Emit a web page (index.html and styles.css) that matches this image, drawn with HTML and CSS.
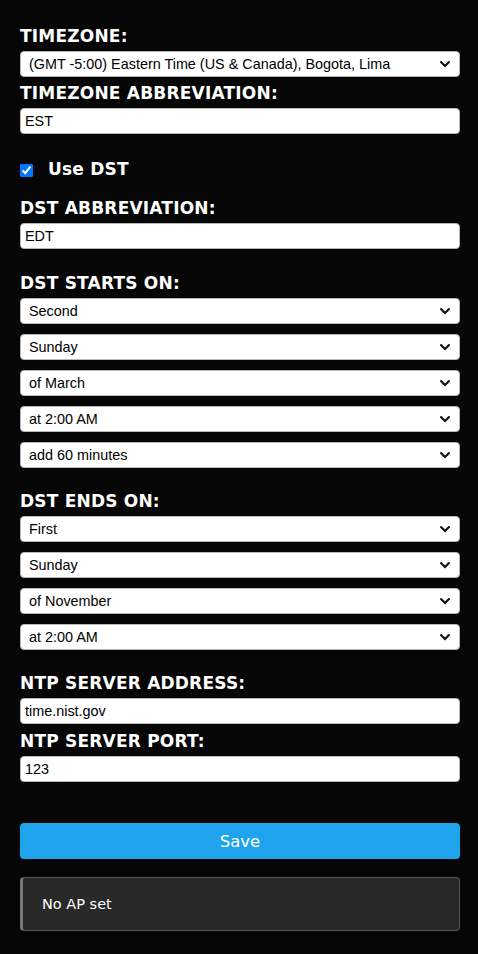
FILE: index.html
```html
<!DOCTYPE html>
<html>
<head>
<meta charset="utf-8">
<link rel="stylesheet" href="styles.css">
</head>
<body>
<form class="form">
  <label class="lbl">TIMEZONE:</label>
  <div class="sel">
    <select><option>(GMT -5:00) Eastern Time (US &amp; Canada), Bogota, Lima</option></select>
    <svg class="chev" width="10" height="7" viewBox="0 0 10 7"><path d="M1.2 1.2 L5 5 L8.8 1.2" fill="none" stroke="#111" stroke-width="2.2" stroke-linecap="square"/></svg>
  </div>
  <label class="lbl">TIMEZONE ABBREVIATION:</label>
  <input class="inp" type="text" value="EST">

  <div class="chk-row">
    <input class="chk" type="checkbox" checked>
    <span class="chk-lbl">Use DST</span>
  </div>

  <label class="lbl">DST ABBREVIATION:</label>
  <input class="inp" type="text" value="EDT">

  <label class="lbl group">DST STARTS ON:</label>
  <div class="stack">
    <div class="sel"><select><option>Second</option></select><svg class="chev" width="10" height="7" viewBox="0 0 10 7"><path d="M1.2 1.2 L5 5 L8.8 1.2" fill="none" stroke="#111" stroke-width="2.2" stroke-linecap="square"/></svg></div>
    <div class="sel"><select><option>Sunday</option></select><svg class="chev" width="10" height="7" viewBox="0 0 10 7"><path d="M1.2 1.2 L5 5 L8.8 1.2" fill="none" stroke="#111" stroke-width="2.2" stroke-linecap="square"/></svg></div>
    <div class="sel"><select><option>of March</option></select><svg class="chev" width="10" height="7" viewBox="0 0 10 7"><path d="M1.2 1.2 L5 5 L8.8 1.2" fill="none" stroke="#111" stroke-width="2.2" stroke-linecap="square"/></svg></div>
    <div class="sel"><select><option>at 2:00 AM</option></select><svg class="chev" width="10" height="7" viewBox="0 0 10 7"><path d="M1.2 1.2 L5 5 L8.8 1.2" fill="none" stroke="#111" stroke-width="2.2" stroke-linecap="square"/></svg></div>
    <div class="sel"><select><option>add 60 minutes</option></select><svg class="chev" width="10" height="7" viewBox="0 0 10 7"><path d="M1.2 1.2 L5 5 L8.8 1.2" fill="none" stroke="#111" stroke-width="2.2" stroke-linecap="square"/></svg></div>
  </div>

  <label class="lbl group2">DST ENDS ON:</label>
  <div class="stack">
    <div class="sel"><select><option>First</option></select><svg class="chev" width="10" height="7" viewBox="0 0 10 7"><path d="M1.2 1.2 L5 5 L8.8 1.2" fill="none" stroke="#111" stroke-width="2.2" stroke-linecap="square"/></svg></div>
    <div class="sel"><select><option>Sunday</option></select><svg class="chev" width="10" height="7" viewBox="0 0 10 7"><path d="M1.2 1.2 L5 5 L8.8 1.2" fill="none" stroke="#111" stroke-width="2.2" stroke-linecap="square"/></svg></div>
    <div class="sel"><select><option>of November</option></select><svg class="chev" width="10" height="7" viewBox="0 0 10 7"><path d="M1.2 1.2 L5 5 L8.8 1.2" fill="none" stroke="#111" stroke-width="2.2" stroke-linecap="square"/></svg></div>
    <div class="sel"><select><option>at 2:00 AM</option></select><svg class="chev" width="10" height="7" viewBox="0 0 10 7"><path d="M1.2 1.2 L5 5 L8.8 1.2" fill="none" stroke="#111" stroke-width="2.2" stroke-linecap="square"/></svg></div>
  </div>

  <label class="lbl group2">NTP SERVER ADDRESS:</label>
  <input class="inp" type="text" value="time.nist.gov">
  <label class="lbl port">NTP SERVER PORT:</label>
  <input class="inp" type="text" value="123">

  <button class="save" type="button">Save</button>

  <div class="msg">No AP set</div>
</form>
</body>
</html>
```
FILE: styles.css
```css
html, body {
  margin: 0;
  padding: 0;
  background: #060606;
}
body {
  padding: 26px 18px 0 20px;
  font-family: "DejaVu Sans", Verdana, sans-serif;
  color: #fff;
}
.form {
  display: flex;
  flex-direction: column;
  width: 440px;
}
.lbl {
  display: block;
  font-size: 17px;
  font-weight: bold;
  line-height: 20px;
  height: 20px;
  margin: 0 0 5px 0;
  letter-spacing: 0.2px;
}
.sel {
  position: relative;
  height: 26px;
  margin-bottom: 6px;
}
.sel select {
  appearance: none;
  -webkit-appearance: none;
  display: block;
  width: 440px;
  height: 26px;
  margin: 0;
  padding: 0 24px 0 8px;
  border: 1px solid #b8b8b8;
  border-radius: 4px;
  background: #fff;
  color: #000;
  font-family: "Liberation Sans", Arial, sans-serif;
  font-size: 14.4px;
  outline: none;
}
.chev {
  position: absolute;
  right: 10px;
  top: 10px;
  pointer-events: none;
}
.inp {
  display: block;
  box-sizing: border-box;
  width: 440px;
  height: 26px;
  margin: 0 0 6px 0;
  padding: 0 4px;
  border: 1px solid #b8b8b8;
  border-radius: 4px;
  background: #fff;
  color: #000;
  font-family: "Liberation Sans", Arial, sans-serif;
  font-size: 14.4px;
  outline: none;
}
.chk-row {
  display: flex;
  align-items: center;
  height: 20px;
  margin: 19px 0 19px 0;
}
.chk {
  width: 13px;
  height: 13px;
  margin: 2px 15px 0 0;
  accent-color: #0075ff;
}
.chk-lbl {
  font-size: 17px;
  font-weight: bold;
  line-height: 20px;
  letter-spacing: 0.2px;
}
.group {
  margin-top: 18px;
}
.group2 {
  margin-top: 23px;
}
.port {
  margin-top: 1px;
}
.stack {
  display: flex;
  flex-direction: column;
  gap: 10px;
}
.stack .sel {
  margin-bottom: 0;
}
.save {
  margin-top: 35px;
  height: 36px;
  width: 440px;
  border: none;
  border-radius: 4px;
  background: #1fa3ec;
  color: #fff;
  font-family: "DejaVu Sans", Verdana, sans-serif;
  font-size: 16.5px;
  padding: 0;
}
.msg {
  box-sizing: border-box;
  margin-top: 18px;
  height: 54px;
  display: flex;
  align-items: center;
  padding-left: 19px;
  background: #292929;
  border: 1px solid #555;
  border-left: 3px solid #777;
  border-radius: 4px;
  font-size: 14.5px;
  color: #fff;
}
```
